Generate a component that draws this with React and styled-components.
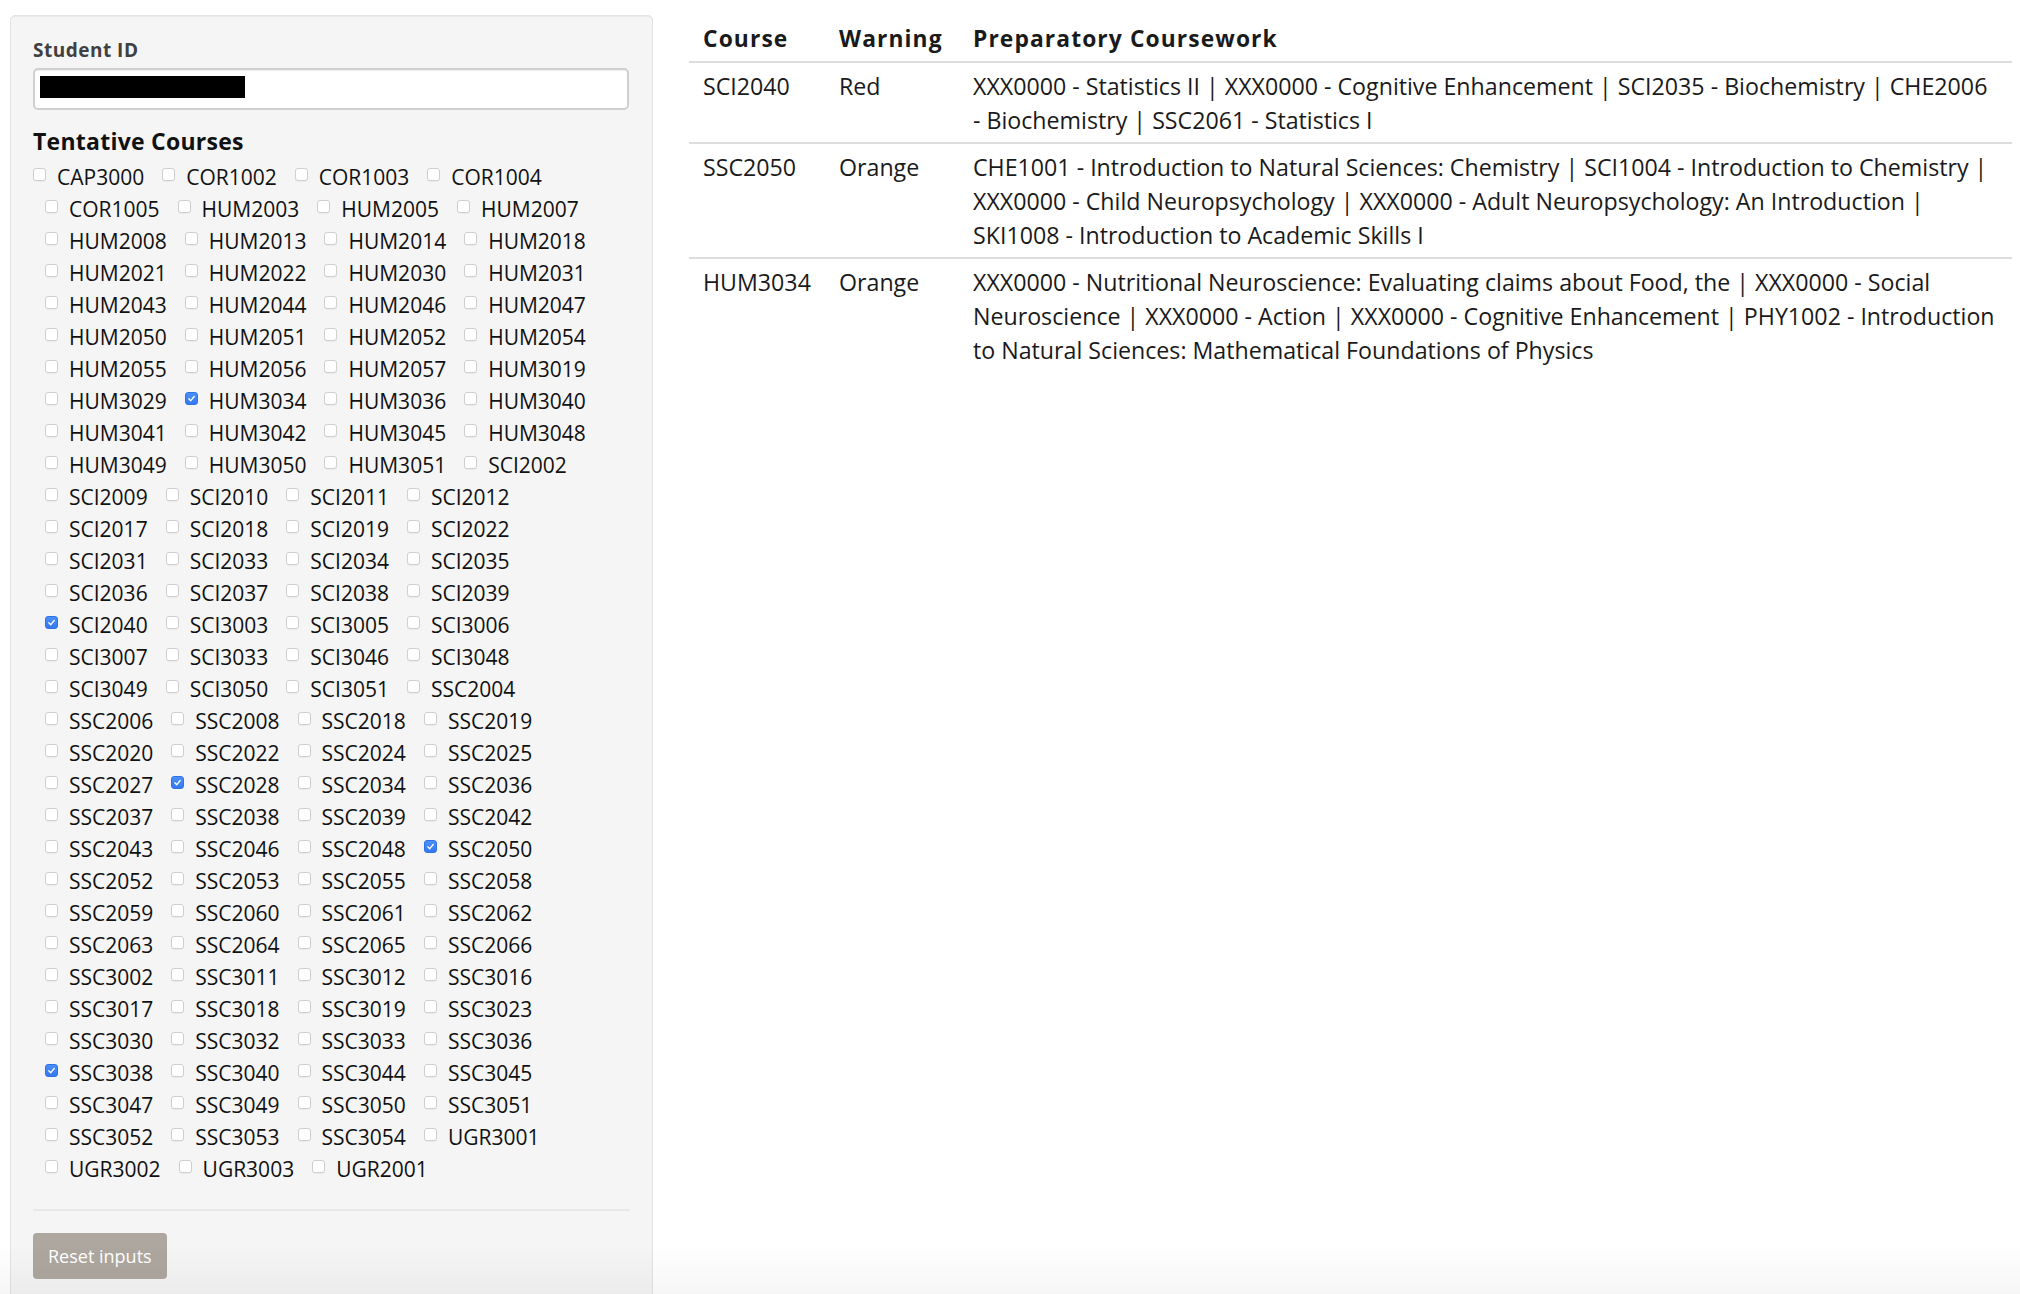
import React from 'react';
import styled, { createGlobalStyle } from 'styled-components';

const GlobalStyle = createGlobalStyle`
  html, body {
    margin: 0;
    padding: 0;
    height: 100%;
    overflow: hidden;
    background: #ffffff;
  }
  body {
    font-family: "Open Sans", "Noto Sans", "Liberation Sans", sans-serif;
    color: #1a1a1a;
  }
  *, *::before, *::after { box-sizing: border-box; }
`;

const Page = styled.div`
  display: flex;
  align-items: flex-start;
  padding-left: 10px;
`;

const Sidebar = styled.aside`
  flex: 0 0 643px;
  margin-top: 15px;
  background: #f5f5f5;
  border: 1px solid #e3e3e3;
  border-radius: 5px;
  box-shadow: inset 0 1px 1px rgba(0, 0, 0, 0.05);
  padding: 21px 22px 40px;
`;

const FieldLabel = styled.label`
  display: block;
  font-size: 19px;
  font-weight: 700;
  line-height: 26px;
  letter-spacing: 0.5px;
  color: #404040;
  margin-bottom: 5px;
`;

const TextInput = styled.div`
  width: 596px;
  height: 42px;
  background: #ffffff;
  border: 2px solid #d0d0d0;
  border-radius: 5px;
  padding: 6px 5px;
  box-shadow: inset 0 1px 1px rgba(0, 0, 0, 0.075);
`;

const Redacted = styled.span`
  display: block;
  width: 205px;
  height: 22px;
  background: #000000;
`;

const GroupLabel = styled.div`
  margin-top: 15px;
  font-size: 23px;
  font-weight: 700;
  line-height: 32px;
  letter-spacing: 0.25px;
  color: #111111;
`;

const CheckList = styled.div`
  margin-top: 4px;
  display: flex;
  flex-direction: column;
`;

const CheckRow = styled.div`
  display: flex;
  gap: 18px;
  height: 32px;
  padding-left: ${(p) => (p.$first ? 0 : 12)}px;
`;

const Option = styled.label`
  display: flex;
  align-items: flex-start;
  font-size: 21px;
  line-height: 32px;
  white-space: nowrap;
  color: #111111;
`;

const Box = styled.span`
  flex: 0 0 13px;
  width: 13px;
  height: 13px;
  margin-top: 7px;
  margin-right: 11px;
  border-radius: 3px;
  display: flex;
  align-items: center;
  justify-content: center;
  background: ${(p) => (p.$checked ? 'linear-gradient(#4a90f7, #3479f2)' : '#ffffff')};
  border: 1px solid ${(p) => (p.$checked ? '#2f72e6' : '#cfcfcf')};
  box-shadow: ${(p) => (p.$checked ? 'none' : '0 1px 1px rgba(0,0,0,0.04)')};
`;

const Divider = styled.hr`
  margin: 23.5px 0 22.5px;
  border: 0;
  height: 0;
  border-top: 2px solid #e8e8e8;
`;

const ResetButton = styled.button`
  height: 46px;
  padding: 0 15px;
  border: none;
  border-radius: 4px;
  background: #aea79f;
  color: #ffffff;
  font-family: "Open Sans", "Noto Sans", sans-serif;
  font-size: 18px;
  font-weight: 500;
  cursor: pointer;
`;

const Main = styled.main`
  flex: 0 0 1323px;
  margin-left: 36px;
  padding-top: 17px;
`;

const Table = styled.table`
  width: 100%;
  border-collapse: collapse;
  table-layout: fixed;
  font-size: 23.2px;
  line-height: 34px;
  color: #1a1a1a;
`;

const HeadCell = styled.th`
  width: ${(p) => (p.$width ? `${p.$width}px` : 'auto')};
  text-align: left;
  font-size: 22.8px;
  font-weight: 700;
  letter-spacing: 1.1px;
  padding: 5px 14px;
  border-bottom: 2px solid #dddddd;
  white-space: nowrap;
`;

const Cell = styled.td`
  vertical-align: top;
  padding: 5.5px 14px;
  border-top: ${(p) => (p.$first ? 'none' : '2px solid #dddddd')};
  white-space: nowrap;
`;

const Line = styled.span`
  display: block;
`;

const BottomFade = styled.div`
  position: fixed;
  left: 0;
  right: 0;
  bottom: 0;
  height: 50px;
  pointer-events: none;
  background: linear-gradient(to bottom, rgba(0, 0, 0, 0), rgba(0, 0, 0, 0.035));
`;

const ROWS = [
  ['CAP3000', 'COR1002', 'COR1003', 'COR1004'],
  ['COR1005', 'HUM2003', 'HUM2005', 'HUM2007'],
  ['HUM2008', 'HUM2013', 'HUM2014', 'HUM2018'],
  ['HUM2021', 'HUM2022', 'HUM2030', 'HUM2031'],
  ['HUM2043', 'HUM2044', 'HUM2046', 'HUM2047'],
  ['HUM2050', 'HUM2051', 'HUM2052', 'HUM2054'],
  ['HUM2055', 'HUM2056', 'HUM2057', 'HUM3019'],
  ['HUM3029', 'HUM3034', 'HUM3036', 'HUM3040'],
  ['HUM3041', 'HUM3042', 'HUM3045', 'HUM3048'],
  ['HUM3049', 'HUM3050', 'HUM3051', 'SCI2002'],
  ['SCI2009', 'SCI2010', 'SCI2011', 'SCI2012'],
  ['SCI2017', 'SCI2018', 'SCI2019', 'SCI2022'],
  ['SCI2031', 'SCI2033', 'SCI2034', 'SCI2035'],
  ['SCI2036', 'SCI2037', 'SCI2038', 'SCI2039'],
  ['SCI2040', 'SCI3003', 'SCI3005', 'SCI3006'],
  ['SCI3007', 'SCI3033', 'SCI3046', 'SCI3048'],
  ['SCI3049', 'SCI3050', 'SCI3051', 'SSC2004'],
  ['SSC2006', 'SSC2008', 'SSC2018', 'SSC2019'],
  ['SSC2020', 'SSC2022', 'SSC2024', 'SSC2025'],
  ['SSC2027', 'SSC2028', 'SSC2034', 'SSC2036'],
  ['SSC2037', 'SSC2038', 'SSC2039', 'SSC2042'],
  ['SSC2043', 'SSC2046', 'SSC2048', 'SSC2050'],
  ['SSC2052', 'SSC2053', 'SSC2055', 'SSC2058'],
  ['SSC2059', 'SSC2060', 'SSC2061', 'SSC2062'],
  ['SSC2063', 'SSC2064', 'SSC2065', 'SSC2066'],
  ['SSC3002', 'SSC3011', 'SSC3012', 'SSC3016'],
  ['SSC3017', 'SSC3018', 'SSC3019', 'SSC3023'],
  ['SSC3030', 'SSC3032', 'SSC3033', 'SSC3036'],
  ['SSC3038', 'SSC3040', 'SSC3044', 'SSC3045'],
  ['SSC3047', 'SSC3049', 'SSC3050', 'SSC3051'],
  ['SSC3052', 'SSC3053', 'SSC3054', 'UGR3001'],
  ['UGR3002', 'UGR3003', 'UGR2001'],
];

const CHECKED = new Set(['HUM3034', 'SCI2040', 'SSC2028', 'SSC2050', 'SSC3038']);

const RESULTS = [
  {
    course: 'SCI2040',
    warning: 'Red',
    lines: [
      'XXX0000 - Statistics II | XXX0000 - Cognitive Enhancement | SCI2035 - Biochemistry | CHE2006',
      '- Biochemistry | SSC2061 - Statistics I',
    ],
  },
  {
    course: 'SSC2050',
    warning: 'Orange',
    lines: [
      'CHE1001 - Introduction to Natural Sciences: Chemistry | SCI1004 - Introduction to Chemistry |',
      'XXX0000 - Child Neuropsychology | XXX0000 - Adult Neuropsychology: An Introduction |',
      'SKI1008 - Introduction to Academic Skills I',
    ],
  },
  {
    course: 'HUM3034',
    warning: 'Orange',
    lines: [
      'XXX0000 - Nutritional Neuroscience: Evaluating claims about Food, the | XXX0000 - Social',
      'Neuroscience | XXX0000 - Action | XXX0000 - Cognitive Enhancement | PHY1002 - Introduction',
      'to Natural Sciences: Mathematical Foundations of Physics',
    ],
  },
];

function CheckMark() {
  return (
    <svg width="9" height="9" viewBox="0 0 10 10" aria-hidden="true">
      <path d="M2 5.3 L4.2 7.4 L8 2.8" fill="none" stroke="#ffffff" strokeWidth="1.5" strokeLinecap="round" strokeLinejoin="round" />
    </svg>
  );
}

export default function App() {
  return (
    <>
      <GlobalStyle />
      <Page>
        <Sidebar>
          <FieldLabel>Student ID</FieldLabel>
          <TextInput>
            <Redacted />
          </TextInput>
          <GroupLabel>Tentative Courses</GroupLabel>
          <CheckList>
            {ROWS.map((row, i) => (
              <CheckRow key={i} $first={i === 0}>
                {row.map((code) => {
                  const checked = CHECKED.has(code);
                  return (
                    <Option key={code}>
                      <Box $checked={checked}>{checked && <CheckMark />}</Box>
                      {code}
                    </Option>
                  );
                })}
              </CheckRow>
            ))}
          </CheckList>
          <Divider />
          <ResetButton type="button">Reset inputs</ResetButton>
        </Sidebar>
        <Main>
          <Table>
            <thead>
              <tr>
                <HeadCell $width={136}>Course</HeadCell>
                <HeadCell $width={134}>Warning</HeadCell>
                <HeadCell>Preparatory Coursework</HeadCell>
              </tr>
            </thead>
            <tbody>
              {RESULTS.map((r, i) => (
                <tr key={r.course}>
                  <Cell $first={i === 0}>{r.course}</Cell>
                  <Cell $first={i === 0}>{r.warning}</Cell>
                  <Cell $first={i === 0}>
                    {r.lines.map((l) => (
                      <Line key={l}>{l}</Line>
                    ))}
                  </Cell>
                </tr>
              ))}
            </tbody>
          </Table>
        </Main>
      </Page>
      <BottomFade />
    </>
  );
}
